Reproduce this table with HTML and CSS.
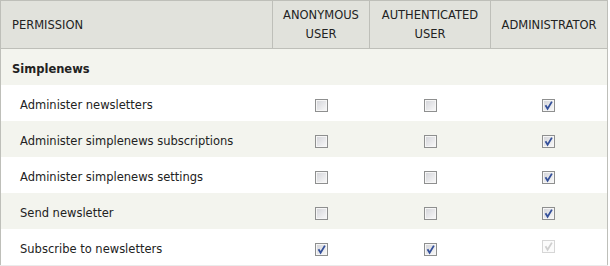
FILE: index.html
```html
<!DOCTYPE html>
<html>

<head>
  <title>Permissions</title>
  <link rel="stylesheet" href="styles.css">
</head>

<body>
  <table id="permissions">
    <thead>
      <tr>
        <th class="col-perm">Permission</th>
        <th class="col-role col-anon">Anonymous user</th>
        <th class="col-role col-auth">Authenticated user</th>
        <th class="col-role col-admin">Administrator</th>
      </tr>
    </thead>
    <tbody>
      <tr class="module">
        <td colspan="4">Simplenews</td>
      </tr>
      <tr>
        <td class="perm">Administer newsletters</td>
        <td class="check"><span class="box"></span></td>
        <td class="check"><span class="box"></span></td>
        <td class="check"><span class="box checked"><svg viewBox="0 0 11 11"><path d="M2.5 5.2 L4.6 8.8 L8.9 1.6" /></svg></span></td>
      </tr>
      <tr class="even">
        <td class="perm">Administer simplenews subscriptions</td>
        <td class="check"><span class="box"></span></td>
        <td class="check"><span class="box"></span></td>
        <td class="check"><span class="box checked"><svg viewBox="0 0 11 11"><path d="M2.5 5.2 L4.6 8.8 L8.9 1.6" /></svg></span></td>
      </tr>
      <tr>
        <td class="perm">Administer simplenews settings</td>
        <td class="check"><span class="box"></span></td>
        <td class="check"><span class="box"></span></td>
        <td class="check"><span class="box checked"><svg viewBox="0 0 11 11"><path d="M2.5 5.2 L4.6 8.8 L8.9 1.6" /></svg></span></td>
      </tr>
      <tr class="even">
        <td class="perm">Send newsletter</td>
        <td class="check"><span class="box"></span></td>
        <td class="check"><span class="box"></span></td>
        <td class="check"><span class="box checked"><svg viewBox="0 0 11 11"><path d="M2.5 5.2 L4.6 8.8 L8.9 1.6" /></svg></span></td>
      </tr>
      <tr class="last">
        <td class="perm">Subscribe to newsletters</td>
        <td class="check"><span class="box checked"><svg viewBox="0 0 11 11"><path d="M2.5 5.2 L4.6 8.8 L8.9 1.6" /></svg></span></td>
        <td class="check"><span class="box checked"><svg viewBox="0 0 11 11"><path d="M2.5 5.2 L4.6 8.8 L8.9 1.6" /></svg></span></td>
        <td class="check"><span class="box checked disabled"><svg viewBox="0 0 11 11"><path d="M2.5 5.2 L4.6 8.8 L8.9 1.6" /></svg></span></td>
      </tr>
    </tbody>
  </table>
</body>

</html>
```

FILE: styles.css
```css
* {
  font-family: "DejaVu Sans", Verdana, sans-serif;
}

body {
  margin: 0;
  background: #fff;
  color: #222;
}

#permissions {
  border-collapse: collapse;
  width: 608px;
  table-layout: fixed;
  font-size: 11.5px;
}

#permissions th {
  background: #e1e2dc;
  border: 1px solid #bebfb9;
  font-weight: normal;
  text-transform: uppercase;
  color: #222;
  height: 46px;
  padding: 1px 0 0;
  line-height: 19px;
  vertical-align: middle;
}

.col-perm {
  width: 271px;
  text-align: left;
  text-indent: 11px;
}

.col-anon {
  width: 96px;
}

.col-auth {
  width: 120px;
}

#permissions td {
  height: 33px;
  padding: 3px 0 0;
  vertical-align: middle;
}

#permissions tbody tr {
  border-left: 1px solid #bebfb9;
  border-right: 1px solid #bebfb9;
}

#permissions tbody tr.last {
  border-bottom: 1px solid #ebebeb;
}

.module td {
  background: #f3f4ee;
  font-weight: bold;
  padding-left: 11px !important;
}

.even td {
  background: #f3f4ee;
}

.perm {
  padding-left: 19px !important;
}

.check {
  text-align: center;
}

.box {
  display: inline-block;
  position: relative;
  width: 11px;
  height: 11px;
  border: 1px solid #8e8f8f;
  background: linear-gradient(135deg, #d2d3d8, #fafafa);
  box-shadow: inset 0 0 0 1px #f6f6f6;
  vertical-align: middle;
  margin-top: 1px;
}

.box svg {
  position: absolute;
  left: 0;
  top: 0;
  width: 11px;
  height: 11px;
}

.box svg path {
  fill: none;
  stroke: #34509a;
  stroke-width: 1.8;
}

.box.disabled {
  border-color: #d6d6d6;
  background: #fbfbfb;
  box-shadow: none;
  margin-top: -5px;
}

.box.disabled svg path {
  stroke: #cfcfcf;
}
```
